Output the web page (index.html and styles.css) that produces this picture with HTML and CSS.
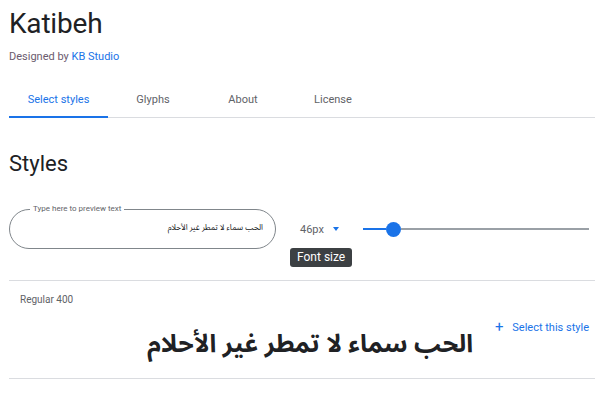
FILE: index.html
```html
<!DOCTYPE html>
<html lang="en">
<head>
  <meta charset="UTF-8">
  <meta name="viewport" content="width=device-width, initial-scale=1.0">
  <title>Katibeh</title>
  <link rel="stylesheet" href="styles.css">
</head>
<body>
  <div class="page">
    <h1 class="family-name">Katibeh</h1>
    <p class="designer">Designed by <a href="#">KB Studio</a></p>

    <!-- Tabs -->
    <nav class="tabs">
      <a class="tab active" href="#">Select styles</a>
      <a class="tab" href="#">Glyphs</a>
      <a class="tab" href="#">About</a>
      <a class="tab" href="#">License</a>
    </nav>

    <h2 class="section-title">Styles</h2>

    <div class="controls">
      <div class="preview-field">
        <span class="field-label">Type here to preview text</span>
        <span class="field-value" dir="rtl">الحب سماء لا تمطر غير الأحلام</span>
      </div>
      <div class="size-picker">
        <span class="size-value">46px</span>
        <span class="caret"></span>
        <span class="tooltip">Font size</span>
      </div>
      <div class="slider">
        <div class="track-fill"></div>
        <div class="thumb"></div>
        <div class="track"></div>
      </div>
    </div>

    <!-- Style rows -->
    <div class="style-row">
      <div class="style-head">
        <span class="style-name">Regular 400</span>
      </div>
      <div class="style-body">
        <p class="sample" dir="rtl">الحب سماء لا تمطر غير الأحلام</p>
        <a class="select-style" href="#"><span class="plus">+</span> Select this style</a>
      </div>
    </div>
  </div>
</body>
</html>
```

FILE: styles.css
```css
/* Base */
body {
  margin: 0;
  font-family: Roboto, 'Open Sans', Arial, sans-serif;
  color: #202124;
  background: #fff;
}
.page { padding: 0 11px 0 9px; }
a { text-decoration: none; }

.family-name {
  margin: 0;
  padding-top: 6px;
  font-size: 28px;
  font-weight: 400;
  line-height: 36px;
  letter-spacing: -0.2px;
}
.designer {
  margin: 8px 0 0;
  font-size: 11px;
  line-height: 14px;
  color: #6b5b6e;
}
.designer a { color: #1a73e8; }

/* Tabs */
.tabs {
  display: flex;
  margin-top: 19px;
  border-bottom: 1px solid #dadce0;
}
.tab {
  min-width: 90px;
  padding: 0 18px;
  box-sizing: border-box;
  height: 35px;
  line-height: 33px;
  text-align: center;
  font-size: 11px;
  color: #5f6368;
  border-bottom: 2px solid transparent;
  margin-bottom: -1px;
}
.tab:first-child { min-width: 99px; }
.tab.active { color: #1a73e8; border-bottom-color: #1a73e8; }

.section-title {
  margin: 32px 0 0;
  font-size: 22px;
  font-weight: 400;
  line-height: 28px;
}

/* Controls */
.controls {
  display: flex;
  align-items: center;
  margin-top: 21px;
  height: 60px;
  border-bottom: 1px solid #dadce0;
  padding-bottom: 21px;
  box-sizing: content-box;
}
.preview-field {
  position: relative;
  width: 267px;
  height: 40px;
  box-sizing: border-box;
  border: 1px solid #80868b;
  border-radius: 20px;
  display: flex;
  align-items: center;
  justify-content: flex-end;
  padding: 0 12px;
}
.field-label {
  position: absolute;
  top: -7px;
  left: 20px;
  padding: 0 3px;
  background: #fff;
  font-size: 8px;
  line-height: 12px;
  color: #5f6368;
}
.field-value {
  font-family: 'Noto Sans Arabic', 'DejaVu Sans Condensed', 'DejaVu Sans', sans-serif;
  font-size: 8px;
  color: #202124;
  margin-top: -3px;
}
.size-picker {
  position: relative;
  display: flex;
  align-items: center;
  margin-left: 24px;
  width: 63px;
}
.size-value { font-size: 11px; color: #5f6368; }
.caret {
  margin-left: 9px;
  width: 0;
  height: 0;
  border-left: 3.5px solid transparent;
  border-right: 3.5px solid transparent;
  border-top: 4px solid #1a73e8;
}
.tooltip {
  position: absolute;
  top: 25px;
  left: -10px;
  padding: 0 7px;
  height: 19px;
  line-height: 19px;
  border-radius: 3px;
  background: #3c4043;
  color: #fff;
  font-size: 12px;
  white-space: nowrap;
}
.slider {
  flex: 1;
  display: flex;
  align-items: center;
  margin-right: 6px;
}
.track-fill { width: 23px; height: 2px; background: #1a73e8; }
.thumb {
  width: 15px;
  height: 15px;
  border-radius: 50%;
  background: #1a73e8;
}
.track { flex: 1; height: 2px; background: #9aa0a6; }

/* Style rows */
.style-row {
  border-bottom: 1px solid #dadce0;
  padding: 7px 6px 10px 11px;
}
.style-name { font-size: 10px; color: #5f6368; }
.style-body {
  display: flex;
  justify-content: flex-end;
  align-items: flex-start;
}
.sample {
  margin: 14px 22px 0 0;
  font-family: 'Noto Sans Arabic', 'DejaVu Sans Condensed', 'DejaVu Sans', sans-serif;
  font-weight: bold;
  font-size: 25px;
  line-height: 47px;
}
.select-style {
  margin-top: 11px;
  font-size: 11px;
  color: #1a73e8;
  white-space: nowrap;
}
.plus { font-size: 15px; margin-right: 6px; vertical-align: -1px; }
```
